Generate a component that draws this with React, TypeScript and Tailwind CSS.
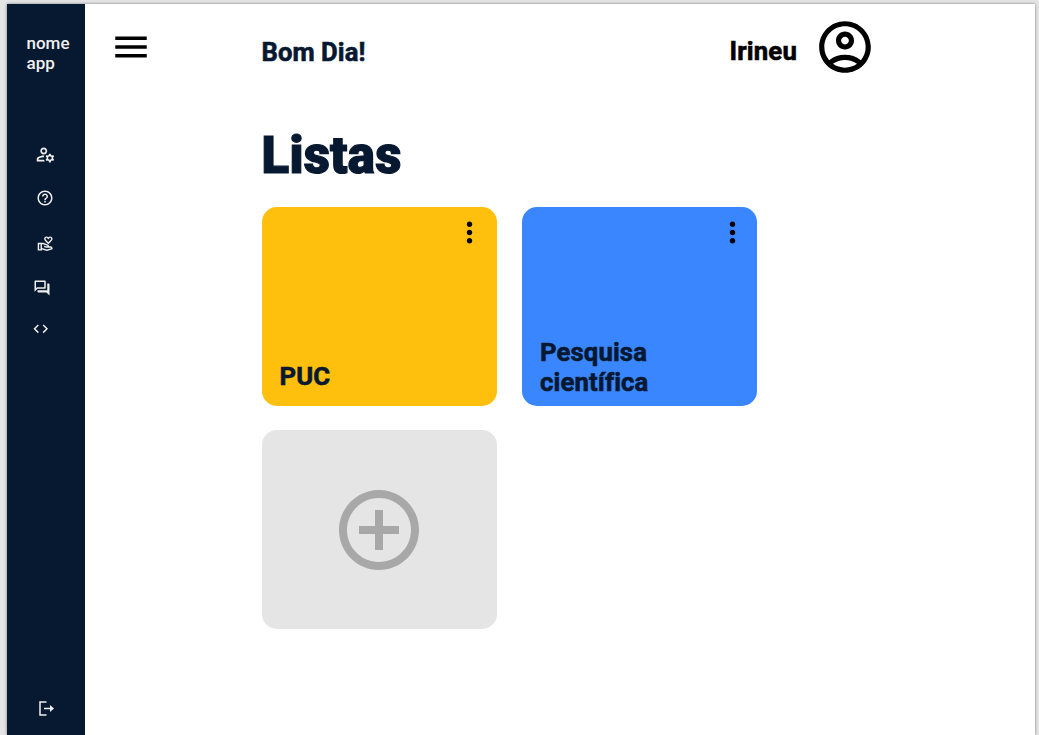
import React from "react";
import {
  MdAddCircleOutline,
  MdCode,
  MdHelpOutline,
  MdMenu,
  MdMoreVert,
  MdOutlineAccountCircle,
  MdOutlineManageAccounts,
  MdOutlineQuestionAnswer,
  MdOutlineVolunteerActivism,
} from "react-icons/md";

function LogoutIcon() {
  return (
    <svg className="mb-[19px] ml-8 mt-auto h-[15px] w-[15px]" viewBox="0 0 15 15" fill="none" stroke="currentColor" strokeWidth="1.5">
      <path d="M7.5 1H1v13h6.5" />
      <path d="M5 7.5h8" />
      <path d="M11 4l4 3.5-4 3.5z" fill="currentColor" stroke="none" />
    </svg>
  );
}

function Sidebar() {
  return (
    <aside className="flex w-[78px] shrink-0 flex-col bg-[#071831] text-[#f0f0ee]">
      <div className="ml-[19.5px] mt-[28.5px] h-[110px] text-[17px] font-medium leading-5">
        nome
        <br />
        app
      </div>
      <nav className="flex flex-col items-start">
        <MdOutlineManageAccounts className="ml-[28px] mt-[1.5px] size-[21px]" />
        <MdHelpOutline className="ml-[29.4px] mt-[24px] size-[18px]" />
        <MdOutlineVolunteerActivism className="ml-[30px] mt-[28px] size-[17px]" />
        <MdOutlineQuestionAnswer className="ml-[26px] mt-[27px] size-[18px]" />
        <MdCode className="ml-[25.4px] mt-[23px] size-[17.5px]" />
      </nav>
      <LogoutIcon />
    </aside>
  );
}

function ListCard({ title, className, menu }: { title: string; className: string; menu: string }) {
  return (
    <article className={`flex h-[199px] w-[235px] flex-col justify-between rounded-[15px] ${className}`}>
      <MdMoreVert className={`mt-[9px] size-[33px] self-end text-black ${menu}`} />
      <h2 className="w-[130px] text-[25.7px] font-bold leading-[30px] tracking-[0.12px] [-webkit-text-stroke:0.6px] [font-variant-ligatures:common-ligatures]">{title}</h2>
    </article>
  );
}

export default function App() {
  return (
    <div className="h-[735px] overflow-hidden bg-[#e5e5e5] pl-[7px] pr-1 pt-1 font-['Roboto',sans-serif] text-[#071831]">
      <div className="flex h-[731px] bg-white shadow-[0_0_3px_rgba(0,0,0,0.45)]">
        <Sidebar />
        <main className="flex-1">
          <header className="flex h-[85px] items-start">
            <MdMenu className="ml-[25.4px] mt-[22.4px] size-[42px] text-black" />
            <h2 className="ml-[109.1px] mt-[33px] w-[468px] text-[25.6px] font-bold leading-[30px] tracking-[0.08px] [-webkit-text-stroke:0.6px]">Bom Dia!</h2>
            <span className="mt-[32.4px] w-[85px] text-[25.8px] font-bold leading-[30px] tracking-[0.15px] text-black [-webkit-text-stroke:0.6px]">Irineu</span>
            <MdOutlineAccountCircle className="mt-[12px] size-[62px] text-black" />
          </header>
          <section className="ml-[176.5px] mt-[35px]">
            <h1 className="h-[83px] pt-[1.5px] text-[51px] font-black leading-[60px] tracking-[0.25px] [-webkit-text-stroke:1.2px]">Listas</h1>
            <div className="grid grid-cols-[235px_235px] gap-x-[25px] gap-y-[24px]">
              <ListCard title="PUC" className="bg-[#ffbf0d] pb-[15px] pl-[18px]" menu="mr-[11px]" />
              <ListCard title="Pesquisa científica" className="bg-[#3a86ff] pb-[9px] pl-[18.5px]" menu="mr-[8px]" />
              <button className="flex h-[199px] w-[235px] items-center justify-center rounded-[15px] bg-[#e5e5e5] text-[#a8a8a8]">
                <MdAddCircleOutline className="size-[96px]" />
              </button>
            </div>
          </section>
        </main>
      </div>
    </div>
  );
}
